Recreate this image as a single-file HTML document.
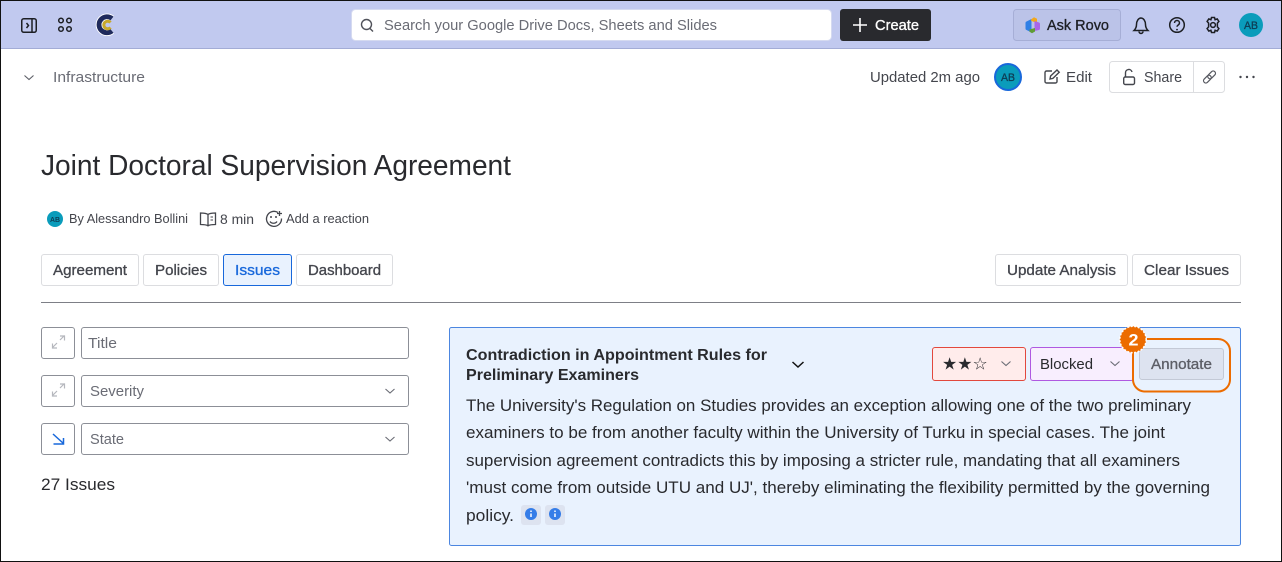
<!DOCTYPE html>
<html lang="en"><head><meta charset="utf-8"><title>Joint Doctoral Supervision Agreement</title>
<style>
html,body{margin:0;padding:0;background:#fff}
svg{display:block}
text{font-family:"Liberation Sans",sans-serif;font-size:14.7px;fill:#44464d;white-space:pre}
.b{font-size:16.8px;fill:#292a2e}
.m{font-size:14.7px;fill:#44464d;stroke:#44464d;stroke-width:.32px}
.h{font-size:15.8px;font-weight:700;fill:#292a2e}
.s{font-size:12.6px;fill:#44464d}
.g{fill:#6a6c75}
.av{font-size:11px;fill:#0e3d55;stroke:#0e3d55;stroke-width:.3px}
</style></head><body>
<svg xmlns="http://www.w3.org/2000/svg" width="1282" height="562" viewBox="0 0 1282 562">
<rect x="0" y="0" width="1282" height="562" fill="#fff"/>
<!-- header -->
<rect x="1" y="1" width="1280" height="48" fill="#c1c9ef"/>
<rect x="1" y="48" width="1280" height="1" fill="#a3acd6"/>
<!-- panel icon + grid -->
<g fill="none" stroke="#1d1f24" stroke-width="1.5">
<rect x="21.750" y="18.750" width="14.500" height="13.500" rx="2"/><path d="M32 19v13"/><path d="M26.500 23l2 2.500-2 2.500"/>
<circle cx="61" cy="20.500" r="2.300"/><circle cx="69" cy="20.500" r="2.300"/><circle cx="61" cy="29" r="2.300"/><circle cx="69" cy="29" r="2.300"/>
</g>
<!-- logo -->
<path d="M112 18.500A8 8 0 1 0 112 31" fill="none" stroke="#fff" stroke-width="6.600"/>
<path d="M112 18.500A8 8 0 1 0 112 31" fill="none" stroke="#1f2a5c" stroke-width="4.800"/>
<path d="M110.500 22.500A3.800 3.800 0 1 0 110.500 27.500" fill="none" stroke="#c9a92c" stroke-width="3"/>
<!-- search -->
<rect x="351.500" y="9.500" width="480" height="31" rx="4" fill="#fff" stroke="#d5daf0"/>
<g fill="none" stroke="#50525a" stroke-width="1.400"><circle cx="366.500" cy="24.500" r="5"/><path d="M370 28.500l3 3"/></g>
<text x="384" y="30" textLength="333" lengthAdjust="spacingAndGlyphs" class="g">Search your Google Drive Docs, Sheets and Slides</text>
<rect x="840" y="9" width="91" height="32" rx="3" fill="#292a2e"/>
<path d="M860 18v14M853 25h14" stroke="#fff" stroke-width="1.600"/>
<text x="875" y="30" textLength="44" lengthAdjust="spacingAndGlyphs" class="m" style="fill:#fff;stroke:#fff">Create</text>
<!-- rovo -->
<rect x="1013.500" y="9.500" width="107" height="31" rx="3" fill="#bbc3e8" stroke="#a6aed6"/>
<path d="M1031.500 19l-5 2.500a1.500 1.500 0 0 0-1 1.500v5.500a1.500 1.500 0 0 0 1 1.500l4 2 1-1z" fill="#2f7fe6"/>
<path d="M1031 19.500l3-2.200 3 1.500v4.500l-6-2.500z" fill="#f2a81d"/>
<path d="M1034.500 21l4.500 1.500a1.500 1.500 0 0 1 1 1.500v4.500a1.500 1.500 0 0 1-1 1.500l-4.500 1z" fill="#a965e8"/>
<path d="M1029.500 29.500l5.500-1.500v3.500l-3 1.700-2.500-1.500z" fill="#5f9c35"/>
<text x="1047" y="30" textLength="62" lengthAdjust="spacingAndGlyphs" class="m" style="fill:#1d1f24;stroke:#1d1f24">Ask Rovo</text>
<!-- bell, help, gear -->
<g fill="none" stroke="#1d1f24" stroke-width="1.500">
<path d="M1134 30.500c1.500-1.500 2.500-3 2.500-6 0-3.500 2-6.500 4.500-6.500s4.500 3 4.500 6.500c0 3 1 4.500 2.500 6z"/><path d="M1139 31.500c0 2.600 4 2.600 4 0"/>
<circle cx="1177" cy="25" r="7.300"/><path d="M1174.500 23c0-3.300 5-3.300 5 0 0 2-2.500 2-2.500 3.800"/>
<circle cx="1213" cy="25" r="2.400"/><path d="M1211.500 17.500h3l.6 2.200 2.100-.8 1.700 2.500-1.500 1.700v3.800l1.500 1.700-1.700 2.500-2.100-.8-.6 2.200h-3l-.6-2.200-2.100.8-1.700-2.500 1.500-1.700v-3.800l-1.500-1.700 1.700-2.500 2.100.8z"/>
</g>
<circle cx="1177" cy="29.600" r=".9" fill="#1d1f24"/>
<circle cx="1251" cy="25" r="12" fill="#0a9cbb"/>
<text x="1244" y="29" textLength="14" lengthAdjust="spacingAndGlyphs" class="av">AB</text>
<!-- toolbar -->
<path d="M24.500 75.500l4.500 4 4.500-4" fill="none" stroke="#5c5e66" stroke-width="1.100"/>
<text x="53" y="82" textLength="92" lengthAdjust="spacingAndGlyphs" class="g">Infrastructure</text>
<text x="870" y="82" textLength="110" lengthAdjust="spacingAndGlyphs">Updated 2m ago</text>
<circle cx="1008" cy="77" r="13" fill="#0a9cbb" stroke="#1868db" stroke-width="2"/>
<text x="1001" y="81" textLength="14" lengthAdjust="spacingAndGlyphs" class="av">AB</text>
<g fill="none" stroke="#44464d" stroke-width="1.400">
<path d="M1052 71h-5.500a1.500 1.500 0 0 0-1.500 1.500v9a1.500 1.500 0 0 0 1.500 1.500h9a1.500 1.500 0 0 0 1.500-1.500V77"/><path d="M1050 79l.6-3 6.400-6 2.200 2.200-6.300 6.200z"/>
</g>
<text x="1066" y="82" textLength="26" lengthAdjust="spacingAndGlyphs">Edit</text>
<rect x="1109.500" y="61.500" width="115" height="31" rx="3" fill="#fff" stroke="#dcdde0"/>
<path d="M1193.500 62v30" stroke="#dcdde0"/>
<g fill="none" stroke="#44464d" stroke-width="1.400">
<rect x="1123.700" y="77" width="10.800" height="7.500" rx="1.500"/><path d="M1125.500 77v-4a3.300 3.300 0 0 1 6.500-1"/>
</g>
<g fill="none" stroke="#55575f" stroke-width="1.200" transform="rotate(-45 1209.500 77)">
<rect x="1202" y="74.700" width="9" height="4.600" rx="2.300"/>
<rect x="1208" y="74.700" width="9" height="4.600" rx="2.300"/>
</g>
<text x="1144" y="82" textLength="38" lengthAdjust="spacingAndGlyphs">Share</text>
<circle cx="1240.500" cy="77" r="1.200" fill="#44464d"/><circle cx="1247" cy="77" r="1.200" fill="#44464d"/><circle cx="1253.500" cy="77" r="1.200" fill="#44464d"/>
<!-- title -->
<text x="41" y="175" textLength="470" lengthAdjust="spacingAndGlyphs" style="font-size:28.500px;fill:#292a2e">Joint Doctoral Supervision Agreement</text>
<!-- byline -->
<circle cx="55" cy="219" r="8" fill="#0a9cbb"/>
<text x="50" y="222" textLength="10" lengthAdjust="spacingAndGlyphs" style="font-size:7.500px;font-weight:700;fill:#0e3d55">AB</text>
<text x="69" y="223" textLength="119" lengthAdjust="spacingAndGlyphs" class="s">By Alessandro Bollini</text>
<g fill="none" stroke="#44464d" stroke-width="1.300">
<path d="M208 214.500c-2-1.500-5-1.500-7.500-1.500v11.500c2.500 0 5.500 0 7.500 1.300 2-1.300 5-1.300 7.500-1.300V213c-2.500 0-5.500 0-7.500 1.500zM208 214.500v11"/>
<path d="M210.500 217h2.500M210.500 220h2.500" stroke-width="1"/>
<path d="M278 212.500a7.500 7.500 0 1 0 3.500 6"/><path d="M270 221.500c1.500 2.300 5.500 2.300 7 0"/><path d="M279.500 211v5M277 213.500h5"/>
</g>
<circle cx="271" cy="217" r="1" fill="#44464d"/><circle cx="276" cy="217" r="1" fill="#44464d"/>
<text x="220" y="224" textLength="34" lengthAdjust="spacingAndGlyphs" style="font-size:14.200px">8 min</text>
<text x="286" y="223" textLength="83" lengthAdjust="spacingAndGlyphs" class="s">Add a reaction</text>
<!-- tabs -->
<g fill="#fff" stroke="#dcdde0">
<rect x="41.500" y="254.500" width="97" height="31" rx="2.500"/>
<rect x="143.500" y="254.500" width="75" height="31" rx="2.500"/>
<rect x="296.500" y="254.500" width="96" height="31" rx="2.500"/>
<rect x="995.500" y="254.500" width="132" height="31" rx="2.500"/>
<rect x="1132.500" y="254.500" width="108" height="31" rx="2.500"/>
</g>
<rect x="223.500" y="254.500" width="68" height="31" rx="2.500" fill="#e9f2fe" stroke="#1868db"/>
<text class="m" x="53" y="275" textLength="74" lengthAdjust="spacingAndGlyphs">Agreement</text>
<text class="m" x="155" y="275" textLength="52" lengthAdjust="spacingAndGlyphs">Policies</text>
<text class="m" x="235" y="275" textLength="45" lengthAdjust="spacingAndGlyphs" style="fill:#1868db;stroke:#1868db">Issues</text>
<text class="m" x="308" y="275" textLength="73" lengthAdjust="spacingAndGlyphs">Dashboard</text>
<text class="m" x="1007" y="275" textLength="109" lengthAdjust="spacingAndGlyphs">Update Analysis</text>
<text class="m" x="1144" y="275" textLength="85" lengthAdjust="spacingAndGlyphs">Clear Issues</text>
<rect x="41" y="302" width="1200" height="1" fill="#7d7f86"/>
<!-- filters -->
<g fill="#fff" stroke="#8c8f97">
<rect x="41.500" y="327.500" width="33" height="31" rx="2.500"/>
<rect x="41.500" y="375.500" width="33" height="31" rx="2.500"/>
<rect x="41.500" y="423.500" width="33" height="31" rx="2.500"/>
<rect x="81.500" y="327.500" width="327" height="31" rx="2.500"/>
<rect x="81.500" y="375.500" width="327" height="31" rx="2.500"/>
<rect x="81.500" y="423.500" width="327" height="31" rx="2.500"/>
</g>
<g fill="none" stroke="#b5b7bd" stroke-width="1.200">
<path d="M52.500 347.500l4.500-4.500M60 340l4.500-4.500M60 336h4.500v4.500M52.500 343.500V348H57"/>
<path d="M52.500 395.500l4.500-4.500M60 388l4.500-4.500M60 384h4.500v4.500M52.500 391.500V396H57"/>
</g>
<path d="M53 434l10.500 9.500M63.500 438v6h-10" fill="none" stroke="#1868db" stroke-width="1.500"/>
<text x="88" y="348" textLength="29" lengthAdjust="spacingAndGlyphs" class="g">Title</text>
<text x="90" y="396" textLength="54" lengthAdjust="spacingAndGlyphs" class="g">Severity</text>
<text x="90" y="444" textLength="34" lengthAdjust="spacingAndGlyphs" class="g">State</text>
<path d="M385.500 389l4.500 4 4.500-4M385.500 437l4.500 4 4.500-4" fill="none" stroke="#6a6c75" stroke-width="1.100"/>
<text x="41" y="490" textLength="74" lengthAdjust="spacingAndGlyphs" style="font-size:16.800px;fill:#292a2e">27 Issues</text>
<!-- card -->
<rect x="449.500" y="327.500" width="791" height="218" rx="2" fill="#e9f2fe" stroke="#4c86e0"/>
<text class="h" x="466" y="360" textLength="301" lengthAdjust="spacingAndGlyphs">Contradiction in Appointment Rules for</text>
<text class="h" x="466" y="380" textLength="173" lengthAdjust="spacingAndGlyphs">Preliminary Examiners</text>
<path d="M792.500 362l5.500 5 5.500-5" fill="none" stroke="#111" stroke-width="1.500"/>
<rect x="932.500" y="347.500" width="93" height="33" rx="2.500" fill="#ffeceb" stroke="#e2483d"/>
<text x="942" y="369.500" style="font-family:'DejaVu Sans',sans-serif;font-size:17px;fill:#292a2e">★★☆</text>
<path d="M1001.500 361.500l4.500 4 4.500-4" fill="none" stroke="#6a6c75" stroke-width="1.100"/>
<rect x="1030.500" y="347.500" width="103" height="33" rx="2.500" fill="#f8eefe" stroke="#af59e1"/>
<text x="1040" y="369" textLength="53" lengthAdjust="spacingAndGlyphs" style="fill:#292a2e">Blocked</text>
<path d="M1110.500 361.500l4.500 4 4.500-4" fill="none" stroke="#6a6c75" stroke-width="1.100"/>
<rect x="1139.500" y="348.500" width="84" height="31" rx="2.500" fill="#dde3f0" stroke="#c3c9d6"/>
<text x="1151" y="369" textLength="61" lengthAdjust="spacingAndGlyphs" class="m" style="fill:#5c5e66;stroke:#5c5e66">Annotate</text>
<rect x="1133" y="339" width="97" height="52.500" rx="12" fill="none" stroke="#ec6c00" stroke-width="2"/>
<circle cx="1133" cy="339.500" r="13.200" fill="#ec6c00" stroke="#fff" stroke-width="1.500" stroke-dasharray="2 1.500"/>
<text x="1128.500" y="345.500" textLength="10" lengthAdjust="spacingAndGlyphs" style="font-size:17px;font-weight:700;fill:#fff">2</text>
<text class="b" x="466" y="411" textLength="725" lengthAdjust="spacingAndGlyphs">The University's Regulation on Studies provides an exception allowing one of the two preliminary</text>
<text class="b" x="466" y="438" textLength="699" lengthAdjust="spacingAndGlyphs">examiners to be from another faculty within the University of Turku in special cases. The joint</text>
<text class="b" x="466" y="466" textLength="714" lengthAdjust="spacingAndGlyphs">supervision agreement contradicts this by imposing a stricter rule, mandating that all examiners</text>
<text class="b" x="466" y="493" textLength="744" lengthAdjust="spacingAndGlyphs">'must come from outside UTU and UJ', thereby eliminating the flexibility permitted by the governing</text>
<text class="b" x="466" y="521" textLength="48" lengthAdjust="spacingAndGlyphs">policy.</text>
<rect x="521" y="505" width="20" height="20" rx="3" fill="#dde3f0"/><rect x="545" y="505" width="20" height="20" rx="3" fill="#dde3f0"/>
<circle cx="531" cy="514" r="6" fill="#357de8"/><circle cx="555" cy="514" r="6" fill="#357de8"/>
<path d="M531 513.500v3.500M555 513.500v3.500" stroke="#fff" stroke-width="1.500"/><path d="M531 510.500v1.500M555 510.500v1.500" stroke="#fff" stroke-width="1.500"/>
<!-- outer frame -->
<rect x="0.500" y="0.500" width="1281" height="561" fill="none" stroke="#111"/>
</svg>
</body></html>
